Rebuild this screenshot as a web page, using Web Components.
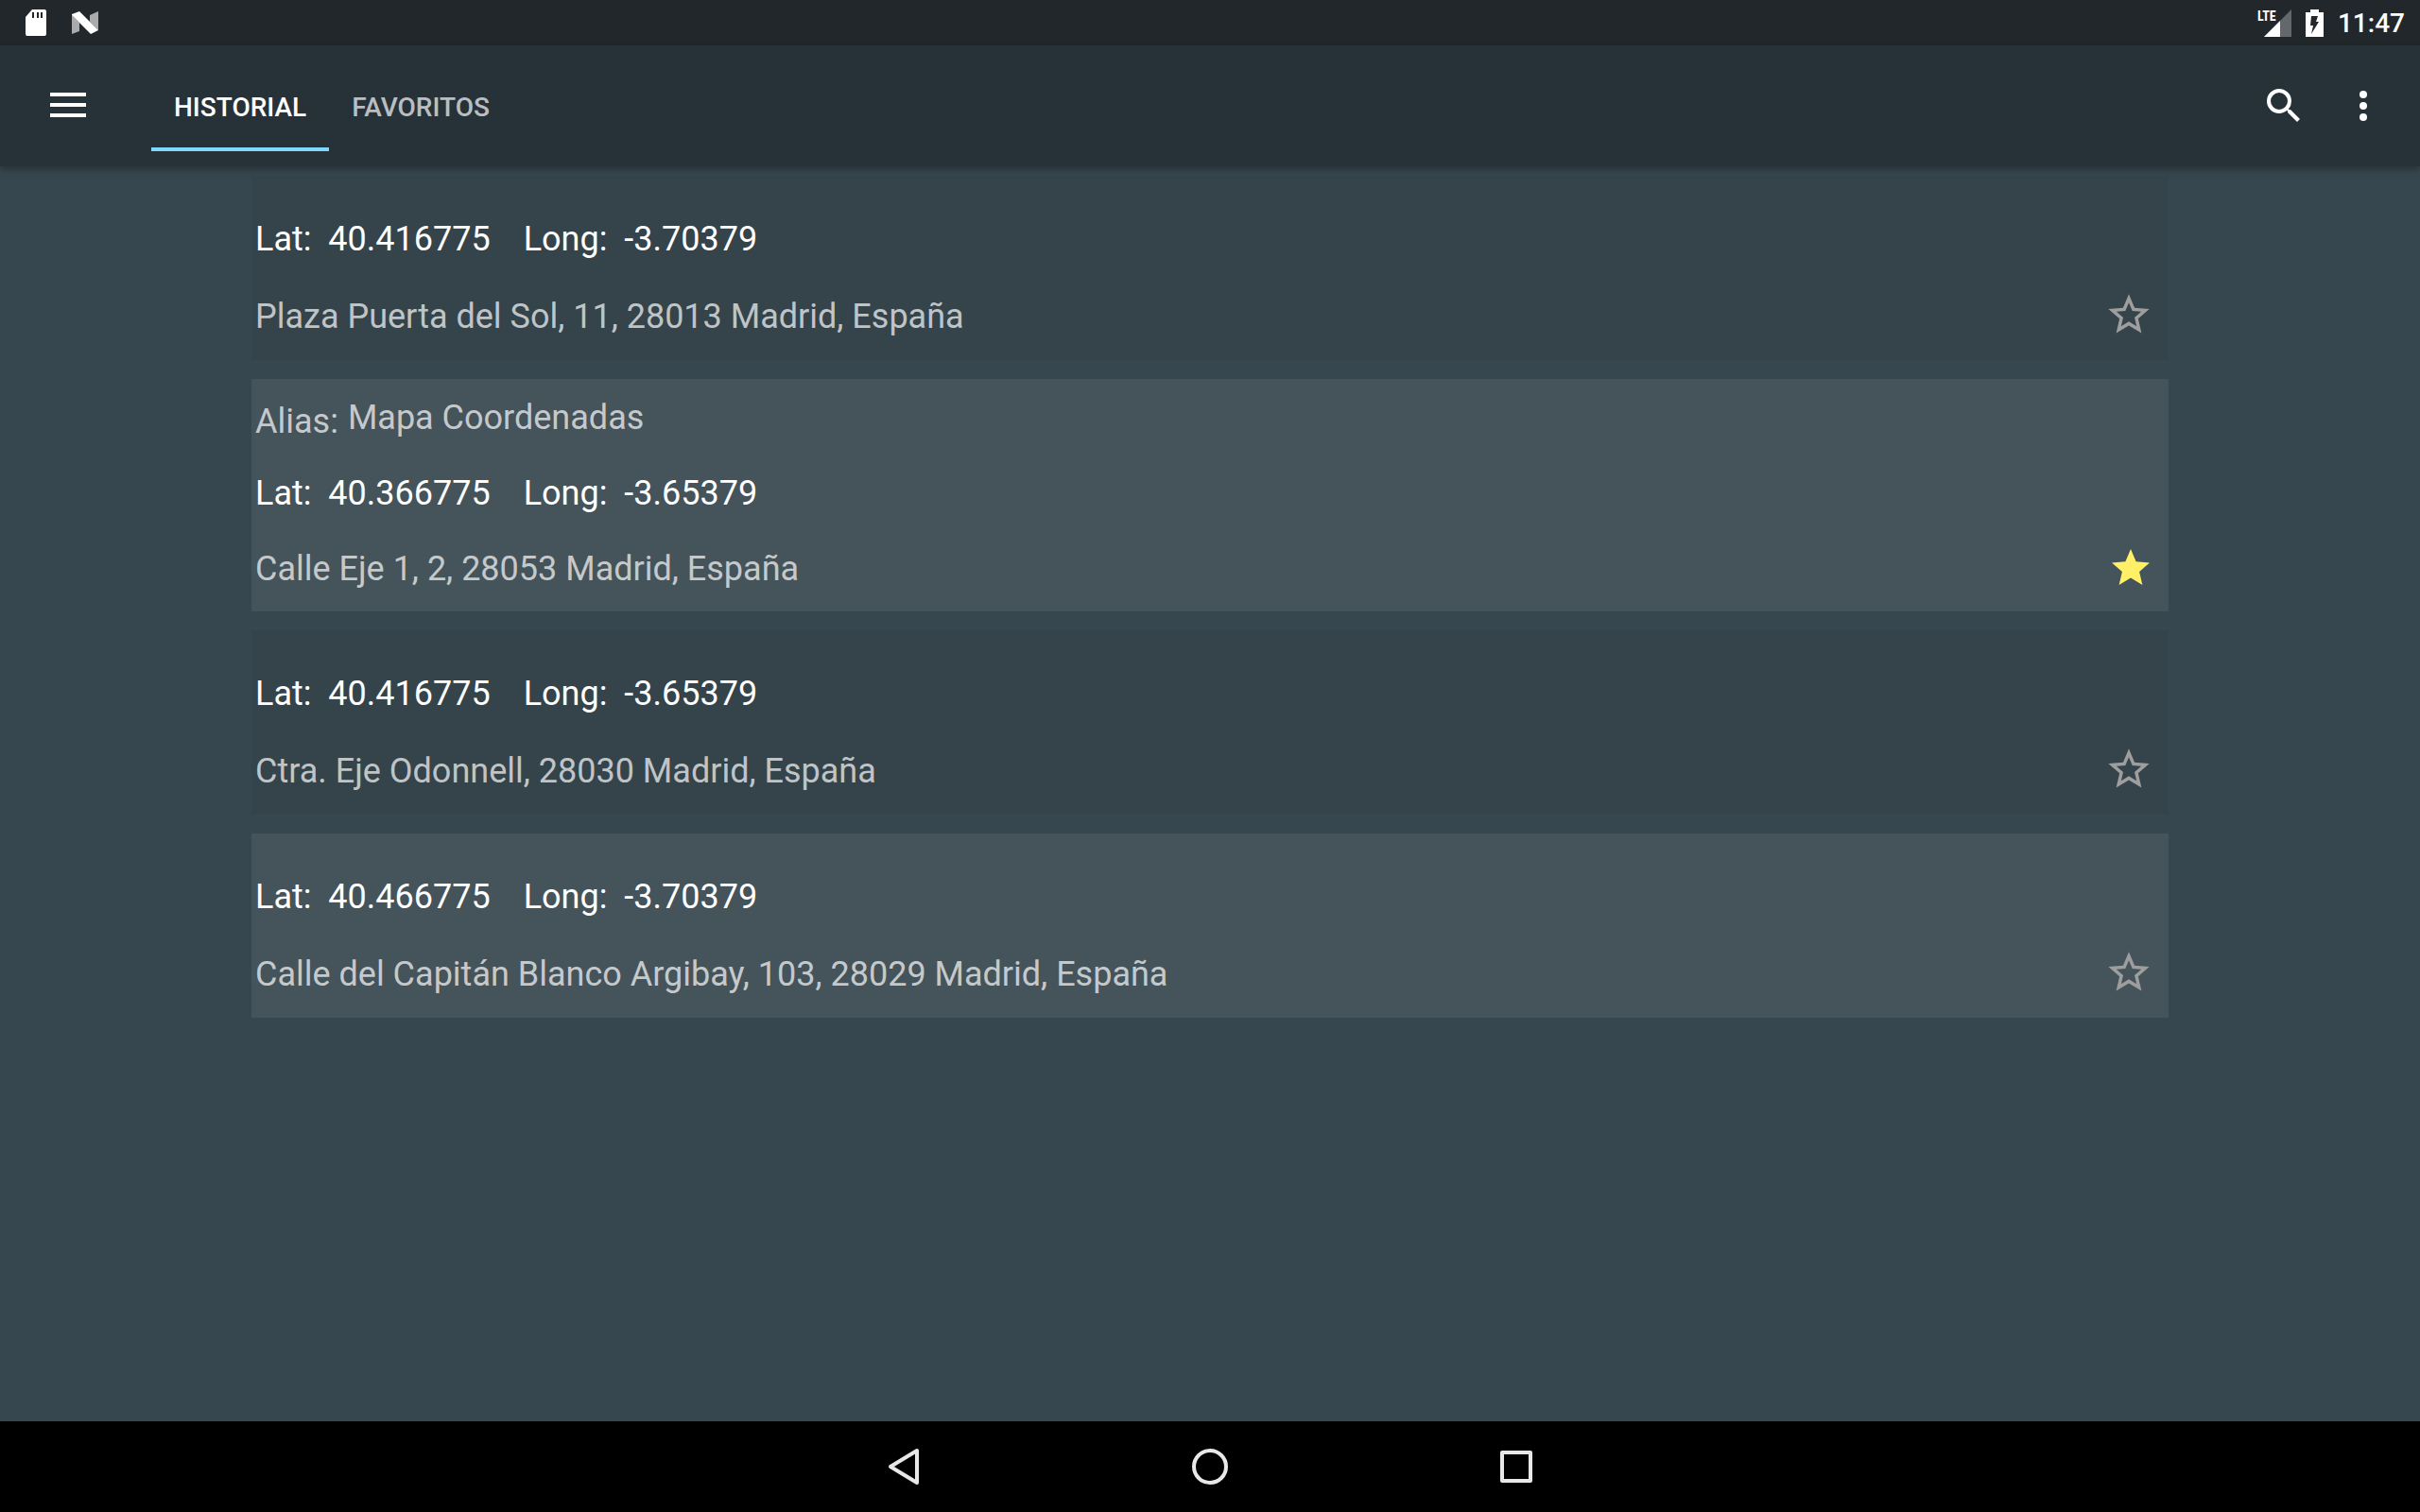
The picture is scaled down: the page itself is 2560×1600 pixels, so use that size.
<!DOCTYPE html>
<html lang="es">
<head>
<meta charset="utf-8">
<title>Mapa Coordenadas</title>
<style>
  html, body {
    height: 100%;
    margin: 0;
  }

  body {
    background: #37474f;
    color: #fff;
    font-family: Roboto, "Noto Sans", sans-serif;
  }
</style>
</head>
<body>
<map-app>
  <status-bar slot="status" time="11:47"></status-bar>
  <app-bar slot="bar">
    <app-tab active>HISTORIAL</app-tab>
    <app-tab>FAVORITOS</app-tab>
  </app-bar>
  <place-card lat="40.416775" long="-3.70379">Plaza Puerta del Sol, 11, 28013 Madrid, España</place-card>
  <place-card lat="40.366775" long="-3.65379" alias="Mapa Coordenadas" favorite>Calle Eje 1, 2, 28053 Madrid, España</place-card>
  <place-card lat="40.416775" long="-3.65379">Ctra. Eje Odonnell, 28030 Madrid, España</place-card>
  <place-card lat="40.466775" long="-3.70379">Calle del Capitán Blanco Argibay, 103, 28029 Madrid, España</place-card>
  <nav-bar slot="nav"></nav-bar>
</map-app>

<script>
class MapApp extends HTMLElement {
  constructor() {
    super();
    this.attachShadow({ mode: 'open' });
    this.shadowRoot.innerHTML = `
      <style>
        :host {
          display: flex;
          flex-direction: column;
          min-height: 100vh;
        }

        main {
          flex: 1;
          display: flex;
          flex-direction: column;
          gap: 20px;
          padding: 10px calc(10% + 10px);
        }

        ::slotted(place-card:nth-of-type(even)) {
          background: #45535a;
        }
      </style>
      <slot name="status"></slot>
      <slot name="bar"></slot>
      <main><slot></slot></main>
      <slot name="nav"></slot>
    `;
  }
}

class StatusBar extends HTMLElement {
  constructor() {
    super();
    this.attachShadow({ mode: 'open' });
    this.shadowRoot.innerHTML = `
      <style>
        :host {
          display: flex;
          align-items: center;
          justify-content: space-between;
          height: 48px;
          padding: 0 16px 0 26px;
          box-sizing: border-box;
          background: #22272b;
          font-size: 28px;
          line-height: 32px;
          font-weight: 500;
        }

        div {
          display: flex;
          align-items: center;
        }

        .left {
          gap: 26px;
        }

        .right {
          gap: 14px;
        }

        time {
          padding-top: 2px;
        }

        .signal {
          display: grid;
          align-items: start;
        }

        .signal > * {
          grid-area: 1 / 1;
        }

        .signal span {
          font: 700 14px/14px "Roboto Condensed", "Liberation Sans Narrow", sans-serif;
        }

        svg {
          display: block;
        }
      </style>
      <div class="left">
        <svg width="24" height="28" viewBox="0 0 24 28">
          <path fill="#fff" fill-rule="evenodd" d="M8 0h13q2 0 2 2v24q0 2-2 2H3q-2 0-2-2V8zM8 3v6h2V3zM13 3v6h2V3zM17 3v6h2V3z"/>
        </svg>
        <svg width="28" height="24" viewBox="0 0 28 24">
          <path fill="#a9abac" d="M0 4l8 8v9l-8 3zM19 4l9-4v20l-9-9z"/>
          <path fill="#fff" d="M0 3l8-3 20 20-8 4L0 4z"/>
        </svg>
      </div>
      <div class="right">
        <div class="signal">
          <svg width="36" height="29" viewBox="0 0 36 29">
            <path fill="#64686a" d="M36 0v29H7z"/>
            <path fill="#fff" d="M24 12v17H7z"/>
          </svg>
          <span>LTE</span>
        </div>
        <svg width="21" height="29" viewBox="-1 0 21 29">
          <path fill="#fff" fill-rule="evenodd" d="M5 0h9v3h5v26H0V3h5zM6 7h7l-2 6h3L6 26l2-9H5z"/>
        </svg>
        <time></time>
      </div>
    `;
  }

  connectedCallback() {
    this.shadowRoot.querySelector('time').textContent = this.getAttribute('time');
  }
}

class AppBar extends HTMLElement {
  constructor() {
    super();
    this.attachShadow({ mode: 'open' });
    this.shadowRoot.innerHTML = `
      <style>
        :host {
          display: flex;
          align-items: center;
          height: 128px;
          padding: 0 16px 0 32px;
          box-sizing: border-box;
          background: #263238;
          box-shadow: 0 3px 8px rgba(0, 0, 0, .35);
          z-index: 1;
        }

        nav {
          flex: 1;
          display: flex;
          padding-left: 48px;
        }

        button {
          display: grid;
          place-items: center;
          width: 80px;
          height: 80px;
          padding: 0;
          border: 0;
          background: none;
          fill: #fff;
        }

        .more {
          width: 88px;
        }
      </style>
      <button aria-label="Menú">
        <svg width="48" height="48" viewBox="0 0 48 48"><path d="M5 10h38v4H5zM5 21h38v4H5zM5 32h38v4H5z"/></svg>
      </button>
      <nav><slot></slot></nav>
      <button aria-label="Buscar">
        <svg width="48" height="48" viewBox="0 0 24 24"><path d="M15.5 14h-.79l-.28-.27A6.47 6.47 0 0 0 16 9.500 6.500 6.500 0 1 0 9.500 16c1.610 0 3.090-.59 4.230-1.570l.27.28v.79l5 4.990L20.490 19l-4.990-5zm-6 0a4.500 4.500 0 1 1 0-9 4.500 4.500 0 0 1 0 9z"/></svg>
      </button>
      <button class="more" aria-label="Más opciones">
        <svg width="48" height="48" viewBox="0 0 24 24"><circle cx="12" cy="6" r="2"/><circle cx="12" cy="12" r="2"/><circle cx="12" cy="18" r="2"/></svg>
      </button>
    `;
  }
}

class AppTab extends HTMLElement {
  constructor() {
    super();
    this.attachShadow({ mode: 'open' });
    this.shadowRoot.innerHTML = `
      <style>
        :host {
          display: block;
        }

        button {
          height: 96px;
          padding: 8px 24px 0;
          border: 0;
          border-bottom: 4px solid transparent;
          background: none;
          color: rgba(255, 255, 255, .7);
          font: 500 28px/32px Roboto, "Noto Sans", sans-serif;
        }

        :host([active]) button {
          border-color: #80d8ff;
          color: #fff;
        }
      </style>
      <button><slot></slot></button>
    `;
  }
}

const STAR = '<svg width="48" height="48" viewBox="0 0 24 24"><path d="M12 17.270L18.180 21l-1.640-7.030L22 9.240l-7.190-.61L12 2 9.190 8.630 2 9.240l5.460 4.730L5.820 21z"/></svg>';
const STAR_BORDER = '<svg width="52" height="52" viewBox="0 0 24 24"><path d="M22 9.240l-7.190-.62L12 2 9.190 8.630 2 9.240l5.460 4.730L5.820 21 12 17.270 18.180 21l-1.630-7.030L22 9.240zM12 15.400l-3.760 2.270 1-4.280-3.320-2.880 4.380-.38L12 6.100l1.710 4.040 4.380.38-3.320 2.880 1 4.280L12 15.400z"/></svg>';

class PlaceCard extends HTMLElement {
  constructor() {
    super();
    this.attachShadow({ mode: 'open' });
    this.shadowRoot.innerHTML = `
      <style>
        :host {
          display: flex;
          align-items: flex-end;
          justify-content: space-between;
          background: #35434a;
          font-size: 36px;
          line-height: 42px;
        }

        .info {
          display: flex;
          flex-direction: column;
          gap: 40px;
          padding: 46px 4px 25px;
        }

        :host([alias]) .info {
          gap: 38px;
          padding: 20px 4px 24px;
        }

        .alias {
          display: flex;
          gap: 10px;
          height: 42px;
        }

        .alias .name {
          padding-top: 4px;
        }

        .alias, .address {
          color: rgba(255, 255, 255, .7);
        }

        .coords {
          display: flex;
          gap: 35px;
        }

        .coords span {
          white-space: pre;
        }

        button {
          padding: 0 16px 22px;
          border: 0;
          background: none;
          fill: #9e9e9e;
        }

        :host([favorite]) button {
          fill: #fff067;
        }

        svg {
          display: block;
        }
      </style>
      <div class="info">
        <div class="coords"><span class="lat"></span><span class="long"></span></div>
        <div class="address"><slot></slot></div>
      </div>
      <button aria-label="Favorito"></button>
    `;
  }

  connectedCallback() {
    const root = this.shadowRoot;
    root.querySelector('.lat').textContent = `Lat:  ${this.getAttribute('lat')}`;
    root.querySelector('.long').textContent = `Long:  ${this.getAttribute('long')}`;
    root.querySelector('button').innerHTML = this.hasAttribute('favorite') ? STAR : STAR_BORDER;

    if (this.hasAttribute('alias')) {
      const row = document.createElement('div');
      row.className = 'alias';
      row.innerHTML = '<span class="name">Alias:</span><span class="value"></span>';
      row.querySelector('.value').textContent = this.getAttribute('alias');
      root.querySelector('.info').prepend(row);
    }
  }
}

class NavBar extends HTMLElement {
  constructor() {
    super();
    this.attachShadow({ mode: 'open' });
    this.shadowRoot.innerHTML = `
      <style>
        :host {
          display: flex;
          justify-content: center;
          gap: 164px;
          height: 96px;
          background: #000;
        }

        button {
          display: grid;
          place-items: center;
          width: 160px;
          padding: 0;
          border: 0;
          background: none;
          fill: none;
          stroke: #e8e8e8;
          stroke-width: 4;
          stroke-linejoin: round;
        }
      </style>
      <button aria-label="Atrás">
        <svg width="48" height="48" viewBox="0 0 48 48"><path d="M38 7v34L10 24z"/></svg>
      </button>
      <button aria-label="Inicio">
        <svg width="48" height="48" viewBox="0 0 48 48"><circle cx="24" cy="24" r="17"/></svg>
      </button>
      <button aria-label="Recientes">
        <svg width="48" height="48" viewBox="0 0 48 48"><path d="M9 9h30v30H9z"/></svg>
      </button>
    `;
  }
}

customElements.define('map-app', MapApp);
customElements.define('status-bar', StatusBar);
customElements.define('app-bar', AppBar);
customElements.define('app-tab', AppTab);
customElements.define('place-card', PlaceCard);
customElements.define('nav-bar', NavBar);
</script>
</body>
</html>
